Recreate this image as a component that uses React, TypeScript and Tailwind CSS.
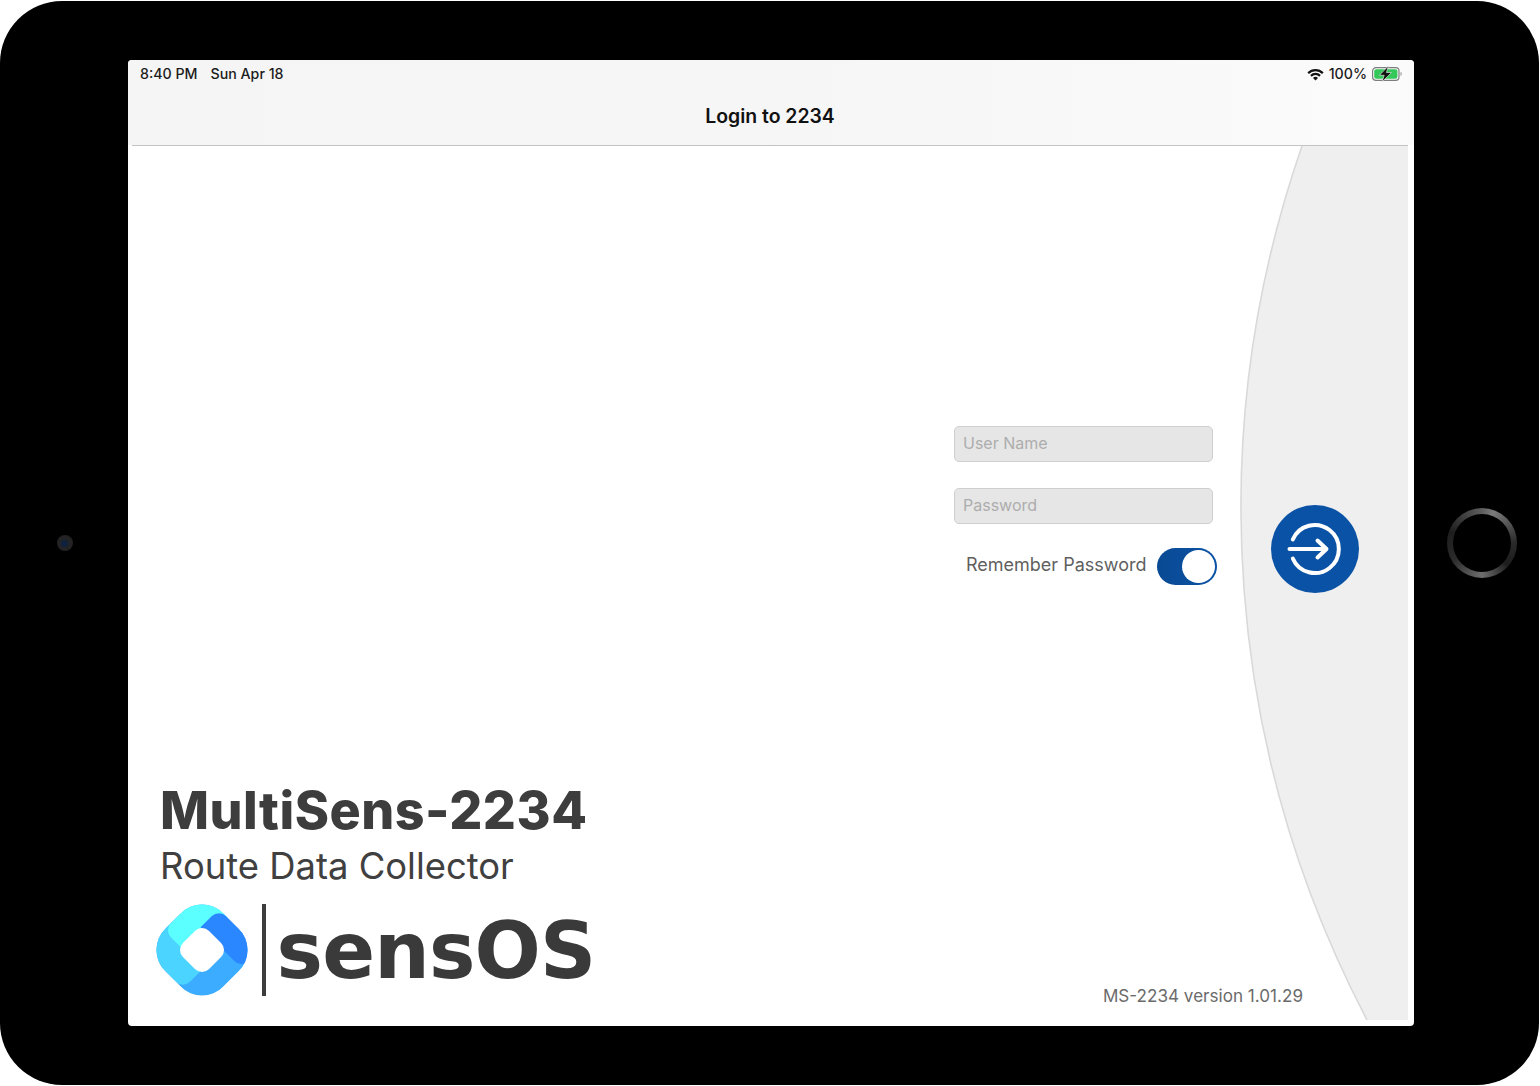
const sans = "font-['Inter','Liberation_Sans',sans-serif]";

function WifiIcon() {
  return (
    <svg width="17" height="13" viewBox="0 0 17 13" className="text-[#111]">
      <path d="M0.4 4.3 A11.4 11.4 0 0 1 16.6 4.3 L15.1 5.9 A9.3 9.3 0 0 0 1.9 5.9 Z" fill="currentColor" />
      <path d="M3.2 7.1 A7.4 7.4 0 0 1 13.8 7.1 L12.3 8.7 A5.2 5.2 0 0 0 4.7 8.7 Z" fill="currentColor" />
      <path d="M6 9.9 A3.6 3.6 0 0 1 11 9.9 L8.5 12.6 Z" fill="currentColor" />
    </svg>
  );
}

function BatteryIcon() {
  return (
    <svg width="31" height="16" viewBox="0 0 31 16">
      <rect x="0.6" y="1.6" width="26.4" height="12.8" rx="3.4" fill="none" stroke="#7d7d7d" strokeWidth="1.2" />
      <rect x="2.2" y="3.2" width="23.2" height="9.6" rx="2" fill="#34C759" />
      <path d="M28.6 5.8 C30 6.2 30 9.8 28.6 10.2 Z" fill="#8a8a8a" />
      <path d="M16.4 0 L7.4 9.3 H12.2 L10 16 L19.4 6.5 H14.4 Z" fill="#111" stroke="#f6f6f6" strokeWidth="0.6" />
    </svg>
  );
}

function StatusBar() {
  return (
    <div className="flex items-center justify-between h-[28px] pl-[12px] pr-[11px] text-[14.2px] leading-none font-medium text-[#1c1c1c]">
      <div className="flex gap-[13px]">
        <span>8:40 PM</span>
        <span>Sun Apr 18</span>
      </div>
      <div className="flex items-center gap-[5px]">
        <WifiIcon />
        <span>100%</span>
        <BatteryIcon />
      </div>
    </div>
  );
}

function SensLogo() {
  return (
    <svg width="92" height="92" viewBox="-46 -46 92 92" className="shrink-0">
      <defs>
        <clipPath id="outer">
          <rect x="-41" y="-41" width="82" height="82" rx="30" />
        </clipPath>
      </defs>
      <g transform="rotate(45)">
        <g clipPath="url(#outer)">
          <rect x="-41" y="-41" width="82" height="82" fill="#3BACFF" />
          <rect x="-60" y="-10" width="74" height="51" rx="10" fill="#4AD4FF" />
          <rect x="-41" y="-60" width="36" height="73" rx="10" fill="#5CFFFF" />
          <path d="M-17 -31 A10 10 0 0 1 -7 -41 H41 V-25 A10 10 0 0 1 31 -15 H-17 Z" fill="#2B87FF" />
        </g>
        <rect x="-18.5" y="-18.5" width="37" height="37" rx="10" fill="#fff" />
      </g>
    </svg>
  );
}

function LoginIcon() {
  return (
    <svg width="64" height="64" viewBox="-32 -32 64 64" fill="none" stroke="#fff" strokeWidth="4" strokeLinecap="round" strokeLinejoin="round">
      <path d="M-22.2 -9.5 A24 24 0 1 1 -22.2 9.5" />
      <path d="M-25.5 0 H11" />
      <path d="M2.5 -8.5 L11.5 0 L2.5 8.5" />
    </svg>
  );
}

function Field({ label }: { label: string }) {
  return (
    <div className="flex items-center h-[36px] w-[259px] pl-2 pb-[3px] rounded-[5px] border border-[#cfcfcf] bg-[#e6e6e6] text-[16px] text-[#adadad]">
      {label}
    </div>
  );
}

export default function App() {
  return (
    <div className={`w-[1540px] h-[1086px] bg-white pt-px ${sans}`}>
      <div className="flex items-center w-[1539px] h-[1084px] rounded-[62px] bg-black">
        {/* camera */}
        <div className="flex justify-center w-[128px] shrink-0 pl-px">
          <div className="flex items-center justify-center w-[16px] h-[16px] rounded-full bg-[#232326] blur-[0.6px]">
            <div className="w-[7px] h-[7px] rounded-full bg-[#10203f]" />
          </div>
        </div>

        {/* screen */}
        <div className="flex flex-col w-[1286px] h-[966px] shrink-0 rounded-[4px] overflow-hidden bg-white">
          <div className="h-[85px] shrink-0 bg-gradient-to-r from-[#f5f5f5] via-[#f6f6f6] to-[#fbfbfb]">
            <StatusBar />
            <div className="pr-[2px] text-center text-[19.4px] leading-[56px] font-semibold text-[#111]">Login to 2234</div>
          </div>

          <div className="flex-1 pl-[4px] pr-[6px] pb-[6px]">
            <main className="relative flex flex-col h-full border-t border-[#c4c4c4]">
              <svg className="absolute inset-0" width="1276" height="874" viewBox="0 0 1276 874">
                <path d="M1170 0 A1104 1104 0 0 0 1235 874 L1276 874 L1276 0 Z" fill="#efefef" />
                <path d="M1170 0 A1104 1104 0 0 0 1235 874" fill="none" stroke="#d9d9d9" strokeWidth="1.6" />
              </svg>

              <div className="relative flex justify-end pt-[280px] pr-[49px]">
                <div className="flex flex-col w-[263px]">
                  <Field label="User Name" />
                  <div className="mt-[26px]">
                    <Field label="Password" />
                  </div>
                  <div className="flex items-center justify-between mt-[24px] pl-[12px] text-[18px] text-[#5f5f5f]">
                    <span className="mt-[-4px]">Remember Password</span>
                    <div className="flex items-center justify-end w-[60px] h-[37px] pr-[2px] rounded-full bg-gradient-to-r from-[#0a4a94] to-[#0a52a5]">
                      <div className="w-[33px] h-[33px] rounded-full bg-white" />
                    </div>
                  </div>
                </div>
                <button className="flex items-center justify-center w-[88px] h-[88px] mt-[79px] ml-[54px] rounded-full bg-[#0a52a5]">
                  <LoginIcon />
                </button>
              </div>

              <div className="relative flex items-end justify-between mt-auto pl-[24px] pr-[105px] pb-[24px]">
                <div className="flex flex-col">
                  <h1 className="ml-[4px] mb-[2px] text-[52px] leading-[60px] font-extrabold tracking-[0.5px] text-[#3d3d3d]">MultiSens-2234</h1>
                  <div className="ml-[4px] text-[36.4px] leading-[46px] text-[#404040]">Route Data Collector</div>
                  <div className="flex items-center mt-[15px]">
                    <SensLogo />
                    <div className="w-[3.5px] h-[92px] ml-[14px] bg-[#3d3d3d]" />
                    <span className="ml-[11px] mt-[2px] font-['DejaVu_Sans',sans-serif] text-[78px] leading-[90px] font-bold tracking-[-0.8px] text-[#3a3a3a]">sensOS</span>
                  </div>
                </div>
                <span className="text-[17.1px] leading-[24px] text-[#6b6b6b] mb-[-12px]">MS-2234 version 1.01.29</span>
              </div>
            </main>
          </div>
        </div>

        {/* home button */}
        <div className="flex flex-1 justify-center pl-[11px]">
          <div className="flex items-center justify-center w-[70px] h-[70px] rounded-full blur-[0.7px] bg-[conic-gradient(#5e5e5e_0deg,#7c7c7c_20deg,#2a2a2a_90deg,#1c1c1c_130deg,#6e6e6e_180deg,#2a2a2a_240deg,#1e1e1e_290deg,#5e5e5e_360deg)]">
            <div className="w-[58px] h-[58px] rounded-full bg-black" />
          </div>
        </div>
      </div>
    </div>
  );
}
